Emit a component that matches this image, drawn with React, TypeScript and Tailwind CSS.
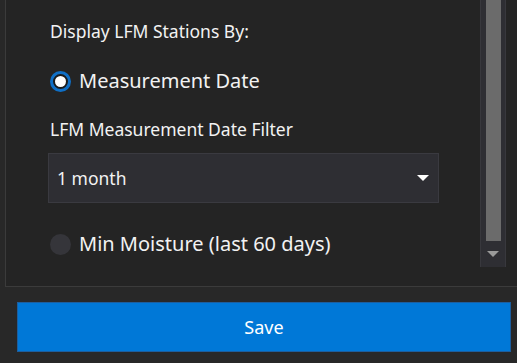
import React, { useState } from 'react';

const options = ['1 week', '2 weeks', '1 month', '3 months'];

export default function App() {
  const [mode, setMode] = useState<'date' | 'moisture'>('date');
  const [filter] = useState(options[2]);

  return (
    <div
      className="w-[517px] h-[363px] overflow-hidden bg-[#282828] text-[#f2f2f2]"
      style={{ fontFamily: '"Noto Sans", "Open Sans", sans-serif' }}
    >
      {/* Settings panel */}
      <div className="ml-[5px] w-[530px] h-[287px] flex bg-[#242424] border-l border-b border-[#3b3b3b]">
        <div className="w-[474px] pl-[44px] pt-[19px]">
          <div className="text-[17.5px] leading-[24px]">Display LFM Stations By:</div>

          <label className="mt-[26px] h-[24px] flex items-center gap-[8px] cursor-pointer" onClick={() => setMode('date')}>
            <span
              className={`w-[21px] h-[21px] rounded-full flex items-center justify-center ${
                mode === 'date' ? 'border-[3px] border-[#0f6fc6] bg-[#1b1b1b]' : 'bg-[#35353a]'
              }`}
            >
              {mode === 'date' && <span className="w-[11px] h-[11px] rounded-full bg-white" />}
            </span>
            <span className="text-[20px] leading-[24px]">Measurement Date</span>
          </label>

          <div className="mt-[24px] text-[17.5px] leading-[24px]">LFM Measurement Date Filter</div>

          <div className="mt-[12px] -ml-[2px] w-[391px] h-[50px] flex items-center justify-between pl-[8px] pr-[8px] bg-[#2e2e33] border border-[#3a3a40]">
            <span className="text-[17.5px]">{filter}</span>
            <svg width="12" height="7" viewBox="0 0 12 7" className="mr-[1px]">
              <path d="M0 0h12L6 6z" fill="#ffffff" />
            </svg>
          </div>

          <label className="mt-[29px] h-[24px] flex items-center gap-[8px] cursor-pointer" onClick={() => setMode('moisture')}>
            <span
              className={`w-[21px] h-[21px] rounded-full flex items-center justify-center ${
                mode === 'moisture' ? 'border-[3px] border-[#0f6fc6] bg-[#1b1b1b]' : 'bg-[#35353a]'
              }`}
            >
              {mode === 'moisture' && <span className="w-[11px] h-[11px] rounded-full bg-white" />}
            </span>
            <span className="text-[20px] leading-[24px]">Min Moisture (last 60 days)</span>
          </label>
        </div>

        {/* Scrollbar */}
        <div className="w-[26px] h-[267px] flex flex-col items-center bg-[#2e2e33] border-x border-[#38383d]">
          <div className="w-[15px] flex-1 bg-[#6b6b6b]" />
          <div className="h-[26px] flex items-center justify-center">
            <svg width="12" height="7" viewBox="0 0 12 7">
              <path d="M0 0h12L6 6z" fill="#9a9a9a" />
            </svg>
          </div>
        </div>
      </div>

      {/* Footer */}
      <div className="pt-[15px] pl-[17px]">
        <button className="w-[494px] h-[50px] bg-[#0078d7] border border-[#1d5e9e] text-white text-[18px]">
          Save
        </button>
      </div>
    </div>
  );
}
